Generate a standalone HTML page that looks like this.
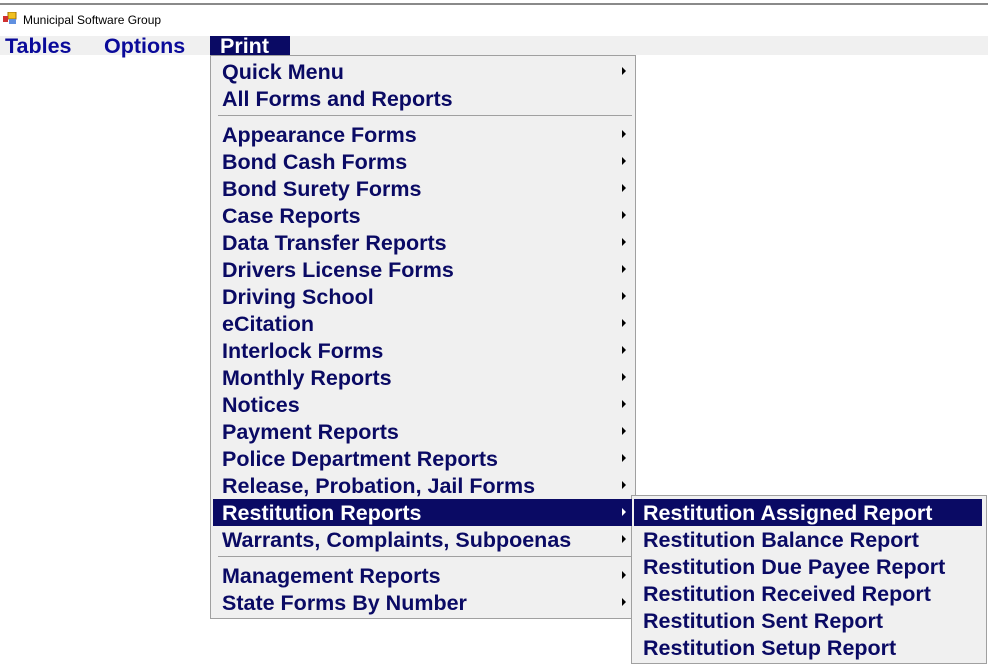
<!DOCTYPE html>
<html><head><style>
*{margin:0;padding:0;box-sizing:border-box}
body{width:988px;height:667px;background:#fff;position:relative;overflow:hidden;font-family:"Liberation Sans",Arial,sans-serif}
.top{position:absolute;left:0;top:0;width:988px;height:5px;background:#fff;border-bottom:2px solid #8a8a8a}
.title{position:absolute;left:23px;top:13px;font-size:12px;color:#000}
.bar{position:absolute;left:0;top:36px;width:988px;height:19px;background:#f0f0f0}
.mb{position:absolute;top:34px;font-size:21.5px;font-weight:bold;color:#0a0a9a;line-height:24px}
.menu{position:absolute;background:#f0f0f0;border:1px solid #a0a0a0}
.it{position:absolute;height:27px;line-height:29px;font-size:21.5px;font-weight:bold;color:#0a0a64;white-space:nowrap}
.hl{background:#0a0a64;color:#fff}
.ar{position:absolute;width:0;height:0;border-top:4px solid transparent;border-bottom:4px solid transparent;border-left:4px solid #000}
.sep{position:absolute;height:1px;background:#a0a0a0}
</style></head><body>
<div class="top"></div>
<svg style="position:absolute;left:3px;top:12px" width="14" height="12" viewBox="0 0 14 12"><rect x="5" y="0" width="8" height="7" fill="#f0c020" stroke="#a07000" stroke-width="1"/><rect x="0" y="4" width="5" height="6" fill="#d03030"/><rect x="6" y="7" width="7" height="5" fill="#6090e0"/></svg>
<div class="title">Municipal Software Group</div>
<div class="bar"></div>
<div class="mb" style="left:5px">Tables</div>
<div class="mb" style="left:104px">Options</div>
<div class="mb" style="left:210px;width:80px;height:19px;top:36px;line-height:21px;background:#0a0a64;color:#fff;padding-left:10px;overflow:hidden">Print</div>

<div class="menu" style="left:210px;top:55px;width:426px;height:564px"></div>
<div class="sep" style="left:218px;top:115px;width:414px"></div>
<div class="sep" style="left:218px;top:556px;width:414px"></div>

<div class="menu" style="left:631px;top:495px;width:356px;height:169px"></div>

<div id="m"></div>
<script>
var L=[["Quick Menu",58,1],["All Forms and Reports",85,0],["Appearance Forms",121,1],["Bond Cash Forms",148,1],["Bond Surety Forms",175,1],["Case Reports",202,1],["Data Transfer Reports",229,1],["Drivers License Forms",256,1],["Driving School",283,1],["eCitation",310,1],["Interlock Forms",337,1],["Monthly Reports",364,1],["Notices",391,1],["Payment Reports",418,1],["Police Department Reports",445,1],["Release, Probation, Jail Forms",472,1],["Restitution Reports",499,1,1],["Warrants, Complaints, Subpoenas",526,1],["Management Reports",562,1],["State Forms By Number",589,1]];
var h="";
L.forEach(function(a){
h+='<div class="it'+(a[3]?' hl':'')+'" style="left:213px;top:'+a[1]+'px;width:419px;padding-left:9px">'+a[0]+'</div>';
if(a[2])h+='<div class="ar" style="left:622px;top:'+(a[1]+9)+'px;'+(a[3]?'border-left-color:#fff':'')+'"></div>';
});
var S=["Restitution Assigned Report","Restitution Balance Report","Restitution Due Payee Report","Restitution Received Report","Restitution Sent Report","Restitution Setup Report"];
S.forEach(function(s,i){
h+='<div class="it'+(i==0?' hl':'')+'" style="left:634px;top:'+(499+27*i)+'px;width:348px;padding-left:9px">'+s+'</div>';
});
document.getElementById("m").innerHTML=h;
</script>
</body></html>
